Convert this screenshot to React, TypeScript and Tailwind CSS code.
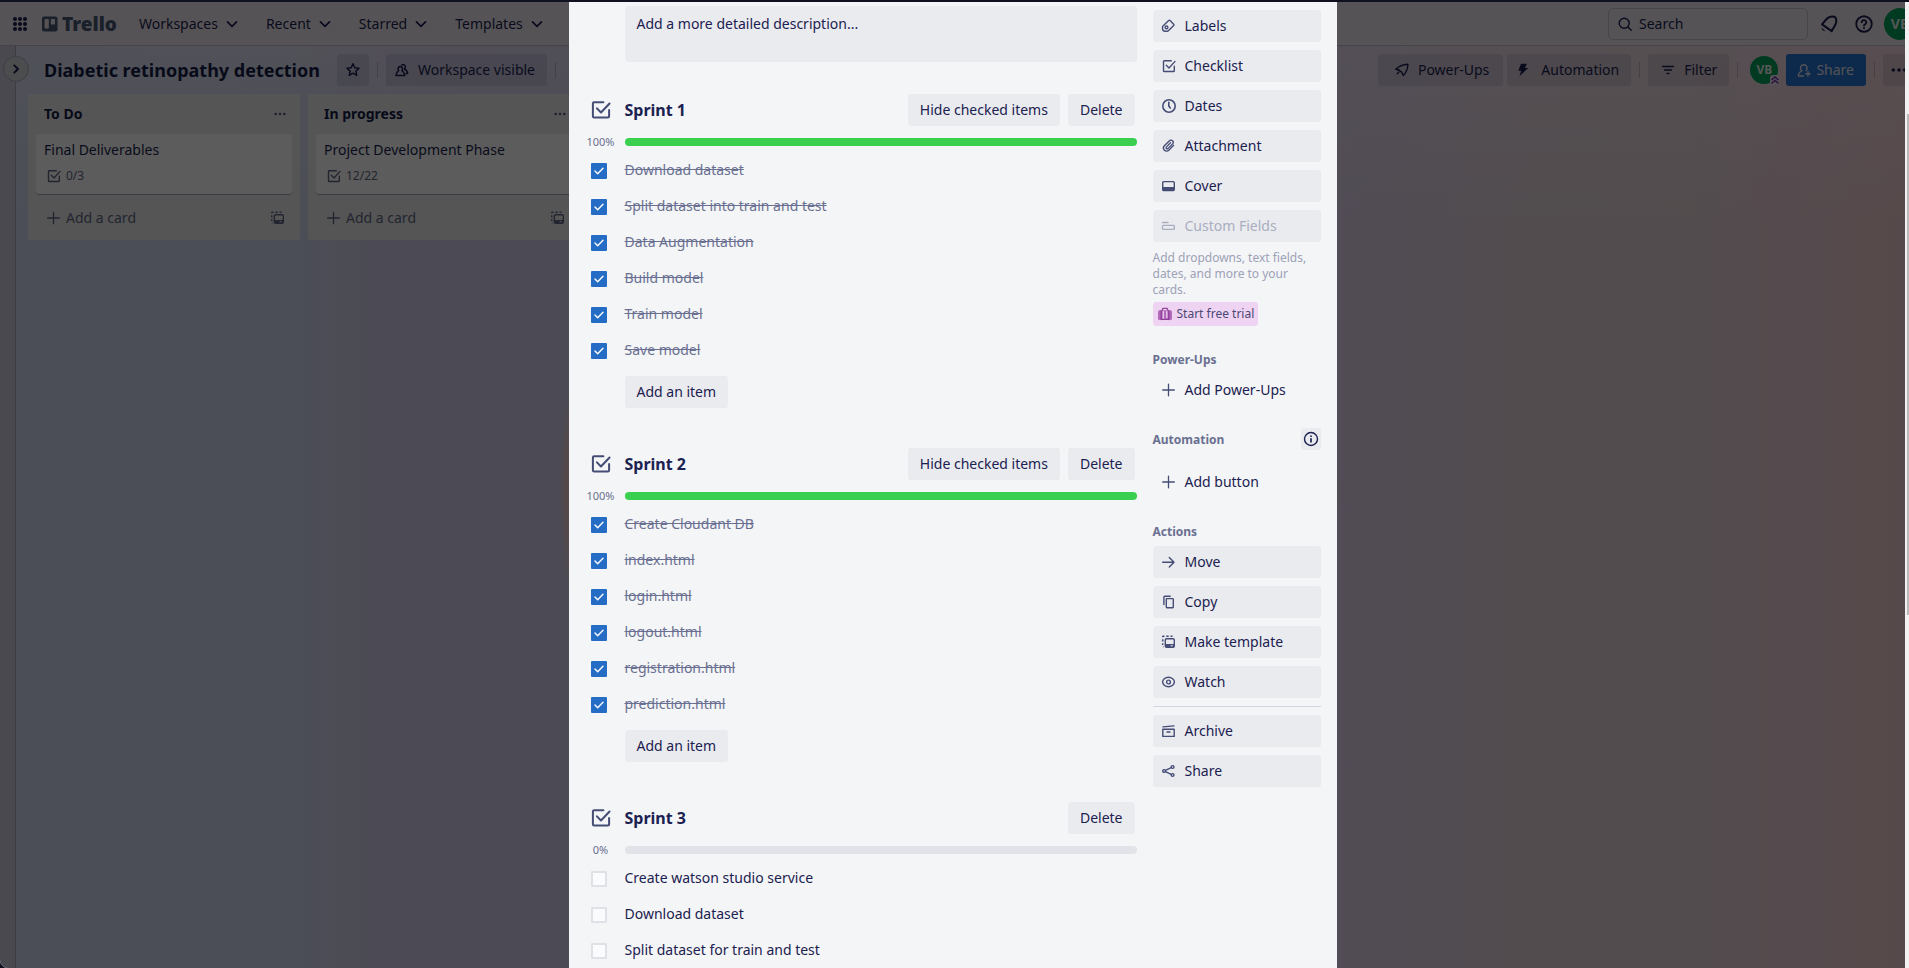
import React from "react";

type IconProps = { className?: string };

function Svg({ className = "size-4", children }: { className?: string; children: React.ReactNode }) {
  return (
    <svg
      viewBox="0 0 16 16"
      className={`shrink-0 ${className}`}
      fill="none"
      stroke="currentColor"
      strokeWidth="1.4"
      strokeLinecap="round"
      strokeLinejoin="round"
      aria-hidden="true"
    >
      {children}
    </svg>
  );
}

const GridIcon = ({ className }: IconProps) => (
  <Svg className={className}>
    {[3, 8, 13].map((y) =>
      [3, 8, 13].map((x) => <circle key={`${x}-${y}`} cx={x} cy={y} r="2" fill="currentColor" stroke="none" />)
    )}
  </Svg>
);
const ChevronDown = ({ className }: IconProps) => (
  <Svg className={className}>
    <path d="M3.5 5.8 8 10.4l4.500-4.600" strokeWidth="1.700" />
  </Svg>
);
const ChevronRight = ({ className }: IconProps) => (
  <Svg className={className}>
    <path d="M6.300 4.300 10 8l-3.700 3.700" strokeWidth="1.900" />
  </Svg>
);
const CheckBoxIcon = ({ className }: IconProps) => (
  <Svg className={className}>
    <path d="M10.300 2.700H3.300a.8.8 0 0 0-.8.8v9.200a.8.8 0 0 0 .8.8h9.200a.8.8 0 0 0 .8-.8V8.300" />
    <path d="M5.300 7.200 8 10l6-6.600" />
  </Svg>
);
const LargeCheckBoxIcon = () => (
  <Svg className="size-6">
    <path d="M9.600 2.900H3.400a.8.800 0 0 0-.8.8v8.500a.8.800 0 0 0 .8.8h9.200a.8.800 0 0 0 .8-.8V8" strokeWidth="1.350" />
    <path d="M5.300 6.900 8 9.700l5.700-6" strokeWidth="1.350" />
  </Svg>
);
const LabelIcon = () => (
  <Svg>
    <path d="M7.700 2.600c.4-.4.900-.4 1.300 0l3.700 3.700c.4.400.4.900 0 1.300l-5.300 5.200c-.3.300-.7.500-1.100.500H4.200A2.700 2.700 0 0 1 1.500 10.600V9.200c0-.5.2-.9.500-1.200z" />
    <circle cx="5.500" cy="9.400" r="1.400" />
  </Svg>
);
const ClockIcon = () => (
  <Svg>
    <circle cx="8" cy="8" r="6.200" strokeWidth="1.600" />
    <path d="M7.800 4.300V8l1.500 2" strokeWidth="1.600" />
  </Svg>
);
const ClipIcon = () => (
  <Svg>
    <path d="m12.600 7.300-4.800 4.900a3.100 3.100 0 0 1-4.400-4.400l5-5a2.200 2.200 0 0 1 3.200 0 2.200 2.200 0 0 1 0 3.100l-4.700 4.700a1.100 1.100 0 0 1-1.600-1.500l4.200-4.300" strokeWidth="1.300" />
  </Svg>
);
const CoverIcon = () => (
  <Svg>
    <rect x="1.700" y="3.600" width="11.600" height="8.900" rx="1.100" />
    <path d="M1.700 9h11.600v2.700a.8.8 0 0 1-.8.8h-10a.8.8 0 0 1-.8-.8z" fill="currentColor" stroke="none" />
  </Svg>
);
const FieldsIcon = () => (
  <Svg>
    <path d="M1.500 4.500h5.500" />
    <rect x="1.500" y="7.400" width="11.800" height="4" rx=".8" />
  </Svg>
);
const PlusIcon = ({ className }: IconProps) => (
  <Svg className={className}>
    <path d="M7.500 2.200v11.600M1.700 8h11.600" strokeWidth="1.300" />
  </Svg>
);
const ArrowIcon = () => (
  <Svg>
    <path d="M1.700 8.200h11M8.300 3.500l4.700 4.700-4.700 4.700" />
  </Svg>
);
const CopyIcon = () => (
  <Svg>
    <rect x="5.300" y="4.600" width="7" height="9.200" rx=".7" />
    <path d="M2.900 10.500V3a.8.8 0 0 1 .8-.8h5.500" />
  </Svg>
);
const TemplateIcon = ({ className }: IconProps) => (
  <Svg className={className}>
    <rect x="4.300" y="4.700" width="9" height="8.600" rx="1.200" />
    <path d="M4.300 10h9v2.200a1.100 1.100 0 0 1-1 1.100H5.300a1 1 0 0 1-1-1z" fill="currentColor" stroke="none" />
    <path d="M10 11.800h1.400" stroke="#ebecf0" strokeWidth="1.100" />
    <path
      d="M1.700 3.200v-.4c0-.3.300-.6.600-.6h1.200M5.300 2.200h2.400M9.500 2.200h2M1.700 5.200v2.200M1.700 9.200v1.900M12.900 2.400v.2M1.900 12.700h.5"
      strokeLinecap="butt"
      strokeWidth="1.500"
    />
  </Svg>
);
const EyeIcon = () => (
  <Svg>
    <path d="M7.500 3.200c3.300 0 5.900 2.800 5.900 4.800s-2.600 4.800-5.900 4.800S1.600 10 1.600 8s2.600-4.800 5.900-4.800z" />
    <circle cx="7.500" cy="8" r="1.900" />
  </Svg>
);
const ArchiveIcon = () => (
  <Svg>
    <path d="M1.800 6.200h11.400v7.200H1.800zM2 3.900l11-1M6 9h3" />
  </Svg>
);
const ShareIcon = () => (
  <Svg>
    <circle cx="3.100" cy="8" r="1.400" />
    <circle cx="11.600" cy="4" r="1.400" />
    <circle cx="11.600" cy="12" r="1.400" />
    <path d="m4.500 7.300 5.700-2.700M4.500 8.700l5.700 2.700" />
  </Svg>
);
const SuitcaseIcon = () => (
  <Svg>
    <rect x="1" y="4.200" width="14" height="9.800" rx="1.600" fill="#b36ab8" stroke="none" />
    <path d="M5.500 4V3.100c0-.4.300-.7.700-.7h3.600c.4 0 .7.300.7.700V4" stroke="#964aa0" />
    <path d="M4.200 4.600v9M11.800 4.600v9M5 13.400h6.500" stroke="#8f3f9b" strokeWidth="1.300" />
    <path d="M6.300 5.500v6.800M9.800 5.500v6.200" stroke="#efd3f3" strokeWidth="1.200" />
  </Svg>
);
const InfoIcon = () => (
  <Svg>
    <circle cx="8" cy="8" r="6.500" />
    <path d="M8 7.800v3" strokeWidth="1.700" />
    <circle cx="8" cy="5.200" r=".9" fill="currentColor" stroke="none" />
  </Svg>
);
const SearchIcon = () => (
  <Svg>
    <circle cx="7.200" cy="7.200" r="5" />
    <path d="m11 11 3.200 3.200" />
  </Svg>
);
const BellIcon = () => (
  <Svg className="size-[18px]">
    <path d="M1.800 8.300C4.500 5.700 5.500 2 9.500 1.500c1.500-.2 3.200-.2 4.200.7 1 1 .9 2.700.7 4.200-.5 3.500-2.600 4.300-4 8z" strokeWidth="1.800" />
    <path d="M1.500 11.200c0 2 1.300 3.300 3.300 3.300z" fill="currentColor" stroke="none" />
  </Svg>
);
const HelpIcon = () => (
  <Svg className="size-[18px]">
    <circle cx="8" cy="8" r="6.900" strokeWidth="1.600" />
    <path d="M6 6.500a2 2 0 1 1 2.900 1.800c-.6.300-.9.600-.9 1.100" strokeWidth="1.600" />
    <circle cx="8" cy="11.600" r=".9" fill="currentColor" stroke="none" />
  </Svg>
);
const StarIcon = () => (
  <Svg>
    <path d="m8 1.800 1.800 3.900 4.200.5-3.100 2.900.8 4.200L8 11.200l-3.700 2.100.8-4.200L2 6.200l4.200-.5z" strokeWidth="1.500" />
  </Svg>
);
const PeopleIcon = () => (
  <Svg>
    <path d="M4.700 8.700a2.400 2.400 0 0 1-.6-1.600c0-1.500 1-2.600 2.200-2.600s2.200 1.100 2.200 2.600c0 .6-.2 1.200-.5 1.600 1.400.8 2.500 2.100 2.800 4.900H1.900c.3-2.800 1.400-4.100 2.800-4.900z" strokeWidth="1.500" />
    <path d="M7.800 2.900a2.400 2.400 0 0 1 3.300 3.200c-.2.400-.4.600-.7.900 1.900.9 3 2.300 3.300 4.600h-1.600" strokeWidth="1.500" />
  </Svg>
);
const RocketIcon = () => (
  <Svg>
    <path d="M2 7.200C5 3.800 9 2.500 13.900 2.200c-.2 4.700-1.500 8.300-4.600 11.200L7.500 9.900z" />
    <path d="m2 7.200 3.500 1M4.800 10.200l-1.600 1.600" />
  </Svg>
);
const BoltIcon = () => (
  <Svg>
    <path d="M6 1.800h6L9.900 6h3.300L4.500 14.300l1.700-5.600H3.300z" fill="currentColor" stroke="none" />
  </Svg>
);
const FilterIcon = () => (
  <Svg>
    <path d="M2.500 4.600h11M4.500 8h7M7.100 11.400h1.800" strokeWidth="1.500" />
  </Svg>
);
const AddUserIcon = () => (
  <Svg>
    <path d="M7.500 14H2.300c.2-2.700 1.500-4.400 3.600-5.200a3.300 3.300 0 1 1 4.200-.4M12 9.500v4.600M9.700 11.800h4.600" />
  </Svg>
);
const DotsIcon = ({ className }: IconProps) => (
  <Svg className={className}>
    {[2.300, 8, 13.700].map((x) => (
      <circle key={x} cx={x} cy="8" r="1.800" fill="currentColor" stroke="none" />
    ))}
  </Svg>
);

function Avatar({ className }: IconProps) {
  return (
    <span className={`flex shrink-0 items-center justify-center rounded-full bg-[#00a05c] font-bold text-[#e8f2ea] ${className}`}>
      VB
    </span>
  );
}

const Divider = () => <span className="h-4 w-px shrink-0 bg-[#172b4d]/20" />;

function AppHeader() {
  return (
    <header className="flex h-11 shrink-0 items-center border-b border-[#c4bccb] bg-[#efe7ef] pl-3 text-sm text-[#191f50]">
      <button aria-label="Apps" className="flex size-4 items-center justify-center">
        <GridIcon className="size-4" />
      </button>
      <a href="#home" className="ml-3.5 flex items-center gap-1 text-[#465a74]">
        <svg viewBox="0 0 16 16" className="size-4" aria-hidden="true">
          <rect x="0" y="0.500" width="15.500" height="15" rx="2" fill="currentColor" />
          <rect x="2.600" y="3" width="4.200" height="9.500" rx=".8" fill="#efe7ef" />
          <rect x="8.800" y="3" width="4.200" height="5.500" rx=".8" fill="#efe7ef" />
        </svg>
        <span className="text-[19px] leading-5 font-black">Trello</span>
      </a>
      <nav className="ml-[22px] flex items-center gap-[26px]">
        {["Workspaces", "Recent", "Starred", "Templates"].map((item) => (
          <button key={item} className="flex items-center gap-1.5">
            {item}
            <ChevronDown />
          </button>
        ))}
      </nav>
      <div className="flex-1" />
      <label className="flex h-8 w-[200px] items-center gap-1.5 rounded-[5px] border border-[#c9c3cf] px-2">
        <SearchIcon />
        <input
          type="search"
          aria-label="Search"
          placeholder="Search"
          className="w-full bg-transparent outline-none placeholder:text-[#191f50]"
        />
      </label>
      <button aria-label="Notifications" className="ml-3">
        <BellIcon />
      </button>
      <button aria-label="Help" className="mx-4 pl-px">
        <HelpIcon />
      </button>
      <Avatar className="mr-px -ml-[5px] size-8 text-sm" />
    </header>
  );
}

const toolButton = "flex h-8 shrink-0 items-center rounded-[3px] bg-[#172b4d]/10";

function BoardHeader() {
  return (
    <div className="flex h-12 shrink-0 items-center pr-0.5 pl-7 text-sm text-[#191f50]">
      <h1 className="text-lg font-bold whitespace-nowrap text-[#151c47]">Diabetic retinopathy detection</h1>
      <button aria-label="Star board" className={`${toolButton} mr-2 ml-[17px] w-8 justify-center`}>
        <StarIcon />
      </button>
      <Divider />
      <button className={`${toolButton} mx-2 gap-2 px-2 pr-3`}>
        <PeopleIcon />
        Workspace visible
      </button>
      <Divider />
      <div className="flex-1" />
      <button className={`${toolButton} mr-1 gap-2 px-3.5 pl-4`}>
        <RocketIcon />
        Power-Ups
      </button>
      <button className={`${toolButton} mr-2 gap-2.5 px-3 pl-2`}>
        <BoltIcon />
        Automation
      </button>
      <Divider />
      <button className={`${toolButton} mx-2 gap-2 px-3`}>
        <FilterIcon />
        Filter
      </button>
      <Divider />
      <div className="relative mr-2 ml-3">
        <Avatar className="size-7 text-xs" />
        <svg viewBox="0 0 10 10" className="absolute -right-0.5 -bottom-px size-2.5" aria-hidden="true">
          <rect width="10" height="10" rx="3" fill="#efe7ef" />
          <path d="M1.500 5 5 2l3.500 3M1.500 8.500 5 5.500l3.500 3" fill="none" stroke="#6b2fb0" strokeWidth="1.500" />
        </svg>
      </div>
      <button className="mr-2 flex h-8 items-center gap-1 rounded-[3px] bg-[#2472d0] pr-3 pl-2.5 text-[#e6e6f0]">
        <AddUserIcon />
        Share
      </button>
      <Divider />
      <button aria-label="More" className={`${toolButton} ml-2 w-8 justify-center`}>
        <DotsIcon />
      </button>
    </div>
  );
}

function List({ title, card, badge }: { title: string; card: string; badge: string }) {
  return (
    <section className="w-[272px] shrink-0 rounded-[3px] bg-[#ebecee] px-2 pb-1.5 text-sm text-[#5f6883]">
      <div className="flex h-10 items-center justify-between pr-1.5 pl-2">
        <h2 className="font-bold text-[#151c47]">{title}</h2>
        <button aria-label="List actions">
          <DotsIcon className="size-3" />
        </button>
      </div>
      <article className="rounded-[3px] bg-white px-2 pt-1.5 pb-2.5 shadow-[0_1px_0_#a5a5bd]">
        <h3 className="leading-5 text-[#191f50]">{card}</h3>
        <p className="mt-2 flex items-center gap-1 pl-0.5 text-xs">
          <CheckBoxIcon className="size-4" />
          {badge}
        </p>
      </article>
      <div className="mt-2 flex h-8 items-center justify-between pr-1.5 pl-2.5">
        <button className="flex items-center gap-1">
          <PlusIcon className="size-4" />
          Add a card
        </button>
        <button aria-label="Create from template">
          <TemplateIcon className="size-4" />
        </button>
      </div>
    </section>
  );
}

const grayButton = "h-8 rounded-[3px] bg-[#eaebef] px-3";

type ChecklistData = { title: string; percent: number; items: string[] };

const checklists: ChecklistData[] = [
  {
    title: "Sprint 1",
    percent: 100,
    items: ["Download dataset", "Split dataset into train and test", "Data Augmentation", "Build model", "Train model", "Save model"],
  },
  {
    title: "Sprint 2",
    percent: 100,
    items: ["Create Cloudant DB", "index.html", "login.html", "logout.html", "registration.html", "prediction.html"],
  },
  {
    title: "Sprint 3",
    percent: 0,
    items: ["Create watson studio service", "Download dataset", "Split dataset for train and test"],
  },
];

function Checklist({ title, percent, items }: ChecklistData) {
  const done = percent === 100;
  return (
    <section className="mb-10">
      <div className="flex h-8 items-center gap-2 pr-0.5">
        <span className="flex w-8 justify-center text-[#454d76]">
          <LargeCheckBoxIcon />
        </span>
        <h3 className="flex-1 text-base font-bold">{title}</h3>
        {done && <button className={grayButton}>Hide checked items</button>}
        <button className={grayButton}>Delete</button>
      </div>
      <div className="mt-3 flex h-2 items-center gap-2">
        <span className="w-8 text-center text-[11px] leading-4 text-[#6a7091]">{percent}%</span>
        <div
          role="progressbar"
          aria-label={title}
          aria-valuenow={percent}
          className="h-2 flex-1 overflow-hidden rounded bg-[#e1e3e8]"
        >
          <div className="h-full bg-[#3acf4e]" style={{ width: `${percent}%` }} />
        </div>
      </div>
      <ul className="mt-1.5">
        {items.map((item) => (
          <li key={item}>
            <label className="flex h-9 items-center gap-[18px] pl-1.5">
              <span className="mt-0.5 grid size-4 shrink-0">
                <input
                  type="checkbox"
                  defaultChecked={done}
                  className="peer size-4 appearance-none rounded-[1px] border-2 border-[#dfe1e6] bg-[#fafbfc] [grid-area:1/1] checked:border-[#246cc4] checked:bg-[#246cc4]"
                />
                <svg
                  viewBox="0 0 16 16"
                  className="pointer-events-none invisible size-4 [grid-area:1/1] peer-checked:visible"
                  aria-hidden="true"
                >
                  <path d="m4 8 2.700 2.700L12 5.200" fill="none" stroke="#f4f8fc" strokeWidth="1.500" strokeLinecap="round" strokeLinejoin="round" />
                </svg>
              </span>
              <span className={done ? "leading-5 text-[#6a7091] line-through" : "leading-5"}>{item}</span>
            </label>
          </li>
        ))}
      </ul>
      {done && <button className={`${grayButton} mt-2 ml-10`}>Add an item</button>}
    </section>
  );
}

function SideButton({ icon, label, plain, disabled }: { icon: React.ReactNode; label: string; plain?: boolean; disabled?: boolean }) {
  return (
    <button
      disabled={disabled}
      className={`flex h-8 w-full items-center gap-2 rounded-[3px] px-2 ${plain ? "" : "bg-[#eaebef]"} ${
        disabled ? "text-[#a9aec0]" : ""
      }`}
    >
      <span className={disabled ? "text-[#a9aec0]" : "text-[#454d76]"}>{icon}</span>
      {label}
    </button>
  );
}

const sideHeading = "text-xs leading-5 font-bold text-[#6a7091]";

function CardSidebar() {
  return (
    <aside className="w-[168px] shrink-0 pt-2">
      <div className="flex flex-col gap-2">
        <SideButton icon={<LabelIcon />} label="Labels" />
        <SideButton icon={<CheckBoxIcon />} label="Checklist" />
        <SideButton icon={<ClockIcon />} label="Dates" />
        <SideButton icon={<ClipIcon />} label="Attachment" />
        <SideButton icon={<CoverIcon />} label="Cover" />
        <SideButton icon={<FieldsIcon />} label="Custom Fields" disabled />
      </div>
      <p className="mt-2 text-xs leading-4 text-[#9da2b7]">Add dropdowns, text fields, dates, and more to your cards.</p>
      <button className="mt-1 flex h-6 items-center gap-1 rounded-[3px] bg-[#efd3f3] px-1 text-xs text-[#4b4a74]">
        <SuitcaseIcon />
        Start free trial
      </button>
      <h4 className={`${sideHeading} mt-6 mb-1`}>Power-Ups</h4>
      <SideButton icon={<PlusIcon />} label="Add Power-Ups" plain />
      <div className="mt-[22px] mb-4 flex items-end justify-between">
        <h4 className={sideHeading}>Automation</h4>
        <button aria-label="About automation" className="flex h-[22px] w-5 items-center justify-center rounded-[3px] bg-[#eaebef]">
          <InfoIcon />
        </button>
      </div>
      <SideButton icon={<PlusIcon />} label="Add button" plain />
      <h4 className={`${sideHeading} mt-6 mb-1`}>Actions</h4>
      <div className="flex flex-col gap-2">
        <SideButton icon={<ArrowIcon />} label="Move" />
        <SideButton icon={<CopyIcon />} label="Copy" />
        <SideButton icon={<TemplateIcon />} label="Make template" />
        <SideButton icon={<EyeIcon />} label="Watch" />
        <hr className="border-[#d3d6e2]" />
        <SideButton icon={<ArchiveIcon />} label="Archive" />
        <SideButton icon={<ShareIcon />} label="Share" />
      </div>
    </aside>
  );
}

function CardDialog() {
  return (
    <div role="dialog" aria-label="Card details" className="flex min-h-full w-[768px] items-start gap-4 self-start bg-[#f4f5f7] px-4 text-sm text-[#1b2150]">
      <div className="flex-1 pt-1">
        <button className="mb-8 ml-10 flex h-14 w-[512px] items-start rounded-[3px] bg-[#eaebef] px-3 py-2">
          Add a more detailed description...
        </button>
        {checklists.map((list) => (
          <Checklist key={list.title} {...list} />
        ))}
      </div>
      <CardSidebar />
    </div>
  );
}

export default function App() {
  return (
    <div className="flex h-screen flex-col overflow-hidden bg-[#10111f] font-['Noto_Sans',sans-serif]">
      <div className="h-0.5 shrink-0" />
      <div className="relative flex-1 overflow-hidden rounded-bl-lg">
        <div className="-mr-2 flex h-full flex-col bg-[radial-gradient(ellipse_390px_440px_at_948px_488px,#f2c8c0_97%,transparent_100%),linear-gradient(90deg,#d0d9f0_0%,#d1d8ee_15%,#d3d0ea_20%,#d1ceea_29%,#dfd2ea_70%,#e3d3da_80%,#e4d3d8_88%,#ebced6_93%,#efcbce_100%)]">
          <AppHeader />
          <div className="flex min-h-0 flex-1 bg-[linear-gradient(180deg,rgba(255,240,255,0.3)_0px,transparent_180px)]">
            <aside className="w-4 shrink-0 border-r border-[#a9a6b8] bg-[#c8c5d6]/80">
              <button
                aria-label="Expand sidebar"
                className="relative top-[10px] left-[3px] flex size-[26px] items-center justify-center rounded-full border border-[#a9a9b8] bg-[#d3d4dc] text-[#191f50]"
              >
                <ChevronRight className="size-4" />
              </button>
            </aside>
            <main className="flex min-w-0 flex-1 flex-col">
              <BoardHeader />
              <div className="flex items-start gap-2 px-3">
                <List title="To Do" card="Final Deliverables" badge="0/3" />
                <List title="In progress" card="Project Development Phase" badge="12/22" />
              </div>
            </main>
          </div>
        </div>
        <div className="absolute inset-0 flex justify-center overflow-hidden bg-black/64 pr-1">
          <CardDialog />
        </div>
        <div className="absolute inset-y-0 right-0 w-1 bg-[#f1f1f1] pt-28 pl-0.5">
          <div className="h-[501px] bg-[#b9b9b9]" />
        </div>
      </div>
    </div>
  );
}
